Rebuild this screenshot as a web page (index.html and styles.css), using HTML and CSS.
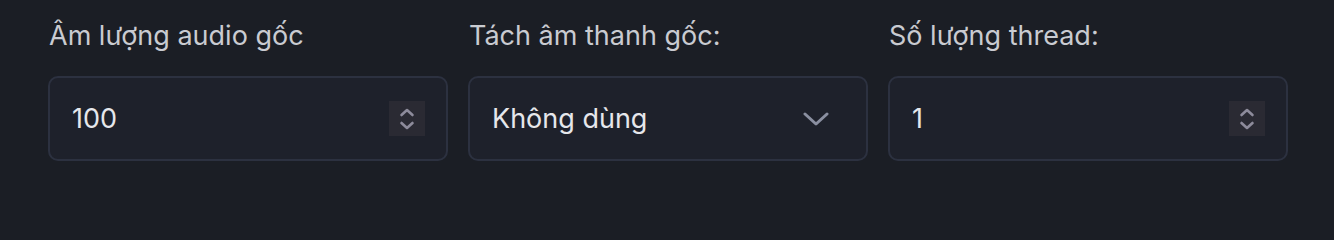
FILE: index.html
```html
<!DOCTYPE html>
<html lang="vi">
<head>
<meta charset="utf-8">
<link rel="stylesheet" href="styles.css">
</head>
<body>
<div class="row">
  <div class="field">
    <div class="label">Âm lượng audio gốc</div>
    <div class="box">
      <span class="value">100</span>
      <span class="spin">
        <svg width="16" height="24" viewBox="0 0 16 24"><path d="M2.5 8 L8 3 L13.5 8 M2.5 16 L8 21 L13.5 16" fill="none" stroke="#8d8b9b" stroke-width="2.6" stroke-linecap="round" stroke-linejoin="round"/></svg>
      </span>
    </div>
  </div>
  <div class="field">
    <div class="label">Tách âm thanh gốc:</div>
    <div class="box">
      <span class="value">Không dùng</span>
      <svg class="chev" width="26" height="14" viewBox="0 0 26 14"><path d="M2 2 L13 12 L24 2" fill="none" stroke="#8a8fa0" stroke-width="3" stroke-linecap="round" stroke-linejoin="round"/></svg>
    </div>
  </div>
  <div class="field">
    <div class="label">Số lượng thread:</div>
    <div class="box">
      <span class="value">1</span>
      <span class="spin">
        <svg width="16" height="24" viewBox="0 0 16 24"><path d="M2.5 8 L8 3 L13.5 8 M2.5 16 L8 21 L13.5 16" fill="none" stroke="#8d8b9b" stroke-width="2.6" stroke-linecap="round" stroke-linejoin="round"/></svg>
      </span>
    </div>
  </div>
</div>
</body>
</html>
```
FILE: styles.css
```css
html, body {
  margin: 0;
  padding: 0;
  background: #1b1e25;
  height: 100%;
}
body {
  font-family: Inter, "Noto Sans", sans-serif;
  font-size: 27px;
}
.row {
  display: grid;
  grid-template-columns: repeat(3, 400px);
  gap: 20px;
  padding: 18px 0 0 48px;
}
.field {
  display: flex;
  flex-direction: column;
}
.label {
  color: #c9cbd1;
  line-height: 36px;
  margin-bottom: 22px;
  padding-left: 1px;
}
.box {
  box-sizing: border-box;
  height: 85px;
  border: 2px solid #2c3140;
  border-radius: 10px;
  background: #1e212b;
  display: flex;
  align-items: center;
  padding: 0 21px 0 22px;
}
.value {
  color: #e6e7eb;
  flex: 1;
}
.spin {
  width: 36px;
  height: 35px;
  background: #2a2a33;
  display: flex;
  align-items: center;
  justify-content: center;
}
.chev {
  margin-right: 16px;
}
```
